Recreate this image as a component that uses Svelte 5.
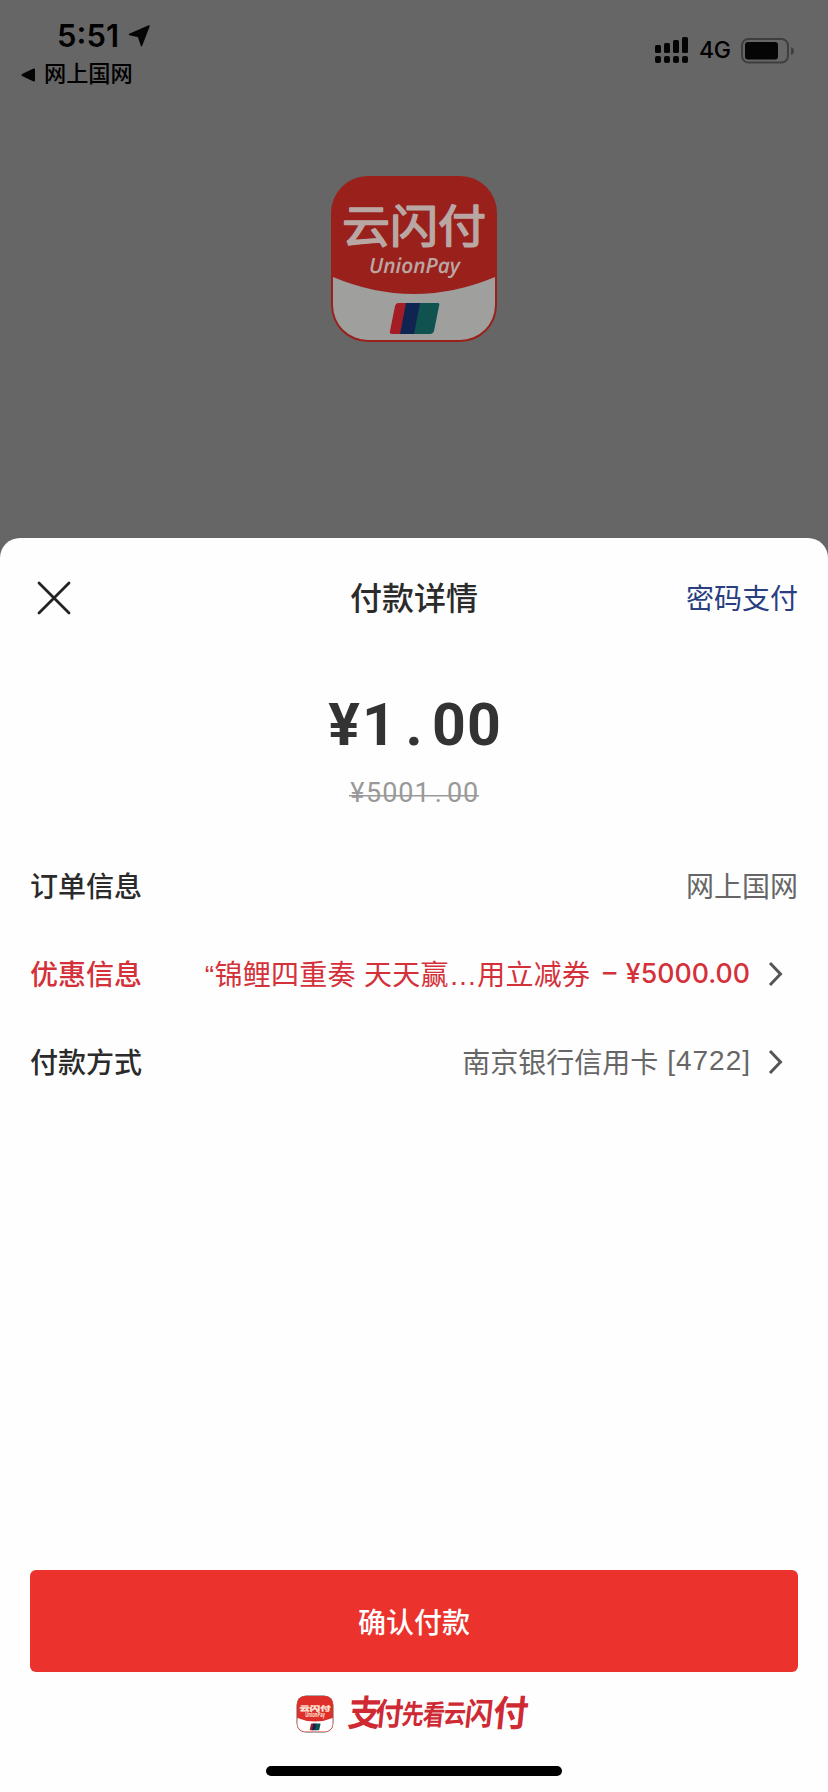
<script lang="ts">
  type Row = {
    label: string
    value: string
    cardNo?: string
    amount?: string
    promo?: boolean
    arrow?: boolean
  }

  const price = "¥1.00"
  const originalPrice = "¥5001.00"

  const rows: Row[] = [
    { label: "订单信息", value: "网上国网" },
    {
      label: "优惠信息",
      value: "“锦鲤四重奏 天天赢…用立减券",
      amount: "– ¥5000.00",
      promo: true,
      arrow: true,
    },
    { label: "付款方式", value: "南京银行信用卡", cardNo: " [4722]", arrow: true },
  ]

  // x, baseline, width and height of every brush character
  const slogan = [
    { ch: "支", x: 0, y: 32, w: 33, h: 36 },
    { ch: "付", x: 27, y: 31, w: 28, h: 31 },
    { ch: "先", x: 54, y: 30, w: 22, h: 27 },
    { ch: "看", x: 75, y: 31, w: 22, h: 28 },
    { ch: "云", x: 96, y: 29, w: 22, h: 26 },
    { ch: "闪", x: 117, y: 31, w: 28, h: 31 },
    { ch: "付", x: 145, y: 32, w: 35, h: 36 },
  ]

  const bars = [8, 10, 13, 16]
</script>

{#snippet logo(bright: boolean)}
  <svg class="logo" class:bright viewBox="0 0 166 166" aria-label="云闪付">
    <rect class="red" width="166" height="166" rx="37" />
    <path class="white" d="M2 101Q83 135 164 101V129A35 35 0 0 1 129 164H37A35 35 0 0 1 2 129Z" />
    <text class="name" x="11" y="67" textLength="144" lengthAdjust="spacingAndGlyphs">云闪付</text>
    <text class="latin" x="38" y="97" textLength="91" lengthAdjust="spacingAndGlyphs">UnionPay</text>
    <path class="flag-red" d="M67 127H80L73 158H61Q58 158 59 155L64 130Q65 127 67 127Z" />
    <path class="flag-blue" d="M75 127H92L86 158H69Z" />
    <path class="flag-green" d="M89 127H107Q109 127 108 130L103 155Q102 158 99 158H83Z" />
  </svg>
{/snippet}

<div class="screen">
  <header class="status">
    <div class="left">
      <div class="clock">
        <span>5:51</span>
        <svg width="22" height="22" viewBox="0 0 22 22">
          <path d="M21 1 1.500 9.500 10.500 11.500 13.500 20.500Z" stroke-width="1.500" />
        </svg>
      </div>
      <div class="back">
        <svg width="15" height="14" viewBox="0 0 15 14">
          <path d="M1.500 7 13 1.500V12.500Z" stroke-width="2" />
        </svg>
        <span>网上国网</span>
      </div>
    </div>
    <div class="right">
      <svg width="34" height="27" viewBox="0 0 34 27">
        {#each bars as h, i}
          <rect x={i * 9} y={16 - h} width="6" height={h} rx="1.500" />
          <rect x={i * 9} y="19" width="6" height="7" rx="2" />
        {/each}
      </svg>
      <span class="network">4G</span>
      <svg width="54" height="26" viewBox="0 0 54 26">
        <rect class="shell" x="1" y="1" width="46" height="23.500" rx="6.500" />
        <rect x="4" y="4" width="33" height="17.500" rx="3" />
        <path class="nub" d="M50 9Q53 10 53 13T50 17Z" />
      </svg>
    </div>
  </header>

  <div class="brand">{@render logo(false)}</div>

  <main class="sheet">
    <div class="head">
      <button class="close" aria-label="关闭">
        <svg width="34" height="34" viewBox="0 0 34 34">
          <path d="M2 2 32 32M32 2 2 32" />
        </svg>
      </button>
      <h1>付款详情</h1>
      <button class="link">密码支付</button>
    </div>

    <div class="price">
      {#each price as ch}<span>{ch}</span>{/each}
    </div>
    <div class="original">
      {#each originalPrice as ch}<span>{ch}</span>{/each}
    </div>

    <div class="rows">
      {#each rows as row}
        <div class="row" class:promo={row.promo}>
          <span class="label">{row.label}</span>
          <span class="value">{row.value}</span>
          {#if row.cardNo}
            <span class="value card-no">{row.cardNo}</span>
          {/if}
          {#if row.amount}
            <span class="amount">{row.amount}</span>
          {/if}
          {#if row.arrow}
            <svg class="arrow" width="16" height="26" viewBox="0 0 16 26">
              <path d="M2 2 12.500 13 2 24" />
            </svg>
          {/if}
        </div>
      {/each}
    </div>

    <footer>
      <button class="confirm">确认付款</button>
      <div class="tagline">
        <div class="mini">{@render logo(true)}</div>
        <svg width="182" height="60" viewBox="0 -10 182 60">
          {#each slogan as s}
            <text transform="translate({s.x} {s.y}) skewX(-6) scale({s.w / 32} {s.h / 32})">{s.ch}</text>
          {/each}
        </svg>
      </div>
      <div class="home"></div>
    </footer>
  </main>
</div>

<style>
  :global(body) {
    background: #666;
  }
  .screen {
    display: flex;
    flex-direction: column;
    height: 1792px;
    width: 828px;
    overflow: hidden;
    background: linear-gradient(#666, #666566);
    font-family: "Liberation Sans", "Noto Sans CJK SC", sans-serif;
    color: #2b2b2b;
  }
  button {
    border: none;
    padding: 0;
    background: none;
    font: inherit;
  }
  svg {
    display: block;
    flex: none;
    overflow: visible;
  }

  .status {
    display: flex;
    justify-content: space-between;
    height: 176px;
    color: #000;
    fill: #050505;
  }
  .left {
    padding: 18px 0 0 21px;
  }
  .clock {
    display: flex;
    align-items: center;
    gap: 9px;
    height: 36px;
    padding-left: 36px;
    font: 600 31px/36px Inter, sans-serif;
  }
  .clock svg path,
  .back svg path {
    stroke: #050505;
    stroke-linejoin: round;
  }
  .back {
    display: flex;
    align-items: center;
    gap: 8px;
    height: 41px;
    font-size: 22.200px;
    font-weight: 500;
  }
  .back span {
    line-height: 24px;
    padding-top: 1px;
  }
  .right {
    display: flex;
    align-items: center;
    height: 27px;
    padding: 37px 33px 0 0;
  }
  .network {
    box-sizing: border-box;
    width: 52px;
    padding-left: 10px;
    font: 500 23px/27px Inter, sans-serif;
    letter-spacing: -0.3px;
  }
  .shell {
    fill: none;
    stroke: #3e3e3e;
    stroke-width: 2;
  }
  .nub {
    fill: #3e3e3e;
  }

  .brand {
    width: 166px;
    height: 166px;
    margin: 0 auto 196px;
  }
  .logo {
    width: 100%;
    height: 100%;
    text-rendering: geometricPrecision;
  }
  .red { fill: #9a201c; }
  .white { fill: #9f9f9e; }
  .name {
    fill: #b9a7a4;
    stroke: #b9a7a4;
    stroke-width: 1.500;
    stroke-linejoin: round;
    font: 400 46px "Noto Sans CJK SC", sans-serif;
  }
  .latin {
    fill: #b9a7a4;
    font: italic 600 21px "Open Sans", sans-serif;
  }
  .flag-red { fill: #a51d24; }
  .flag-blue { fill: #102452; }
  .flag-green { fill: #10524f; }
  .bright .red { fill: #df2f2b; }
  .bright .white { fill: #fff; }
  .bright .name,
  .bright .latin { fill: #ffe9dc; }
  .bright .name { stroke: #ffe9dc; }

  .sheet {
    display: flex;
    flex-direction: column;
    flex: 1;
    border-radius: 20px 20px 0 0;
    background: #fefefe;
  }
  .head {
    display: grid;
    grid-template-columns: 1fr auto 1fr;
    align-items: center;
    height: 120px;
    padding: 0 30px 0 37px;
  }
  .close path {
    fill: none;
    stroke: #222;
    stroke-width: 2.800;
    stroke-linecap: round;
  }
  h1 {
    margin: 1px 0 0 -7px;
    font-size: 32px;
    font-weight: 500;
    line-height: 40px;
  }
  .link {
    justify-self: end;
    margin-bottom: 2px;
    font-size: 28px;
    color: #293f80;
  }
  .price {
    display: flex;
    justify-content: center;
    height: 70px;
    margin-top: 32px;
    font: 700 59px/70px Roboto, sans-serif;
    color: #333;
  }
  .price span {
    width: 35px;
    text-align: center;
  }
  .original {
    display: flex;
    align-self: center;
    height: 36px;
    margin-top: 15px;
    font: 400 27px/36px Roboto, sans-serif;
    color: #999;
    background: linear-gradient(#999, #999) 0 20px / 100% 1.500px no-repeat;
  }
  .original span {
    width: 16.200px;
    text-align: center;
  }
  .rows {
    margin-top: 30px;
    padding: 0 30px;
  }
  .row {
    display: flex;
    align-items: center;
    height: 88px;
    font-size: 28px;
    white-space: pre;
  }
  .label {
    margin-right: auto;
    font-weight: 500;
  }
  .value {
    color: #666;
  }
  .card-no {
    letter-spacing: 1px;
    margin-right: -1px;
  }
  .promo .label,
  .promo .value,
  .promo .amount {
    color: #d4313a;
  }
  .promo .value {
    letter-spacing: 0.300px;
  }
  .amount {
    margin-left: 12.500px;
    font: 500 26.700px Inter, sans-serif;
    word-spacing: 2.500px;
  }
  .arrow {
    margin: 2px 14px 0 18px;
    fill: none;
    stroke: #555;
    stroke-width: 3;
  }

  footer {
    margin-top: auto;
    padding: 0 30px 16px;
  }
  .confirm {
    display: block;
    width: 100%;
    height: 102px;
    border-radius: 6px;
    background: #eb322d;
    color: #fff;
    font-size: 28px;
    font-weight: 500;
  }
  .tagline {
    display: flex;
    justify-content: center;
    align-items: center;
    gap: 14px;
    height: 84px;
    margin-right: 2px;
  }
  .mini {
    width: 36px;
    height: 36px;
    border-radius: 9px;
    box-shadow: 0 0 0 0.500px #555;
  }
  .tagline text {
    fill: #cf2a33;
    font: 700 32px "Noto Sans CJK SC", sans-serif;
  }
  .home {
    width: 296px;
    height: 10px;
    margin: 10px auto 0;
    border-radius: 5px;
    background: #000;
  }
</style>
